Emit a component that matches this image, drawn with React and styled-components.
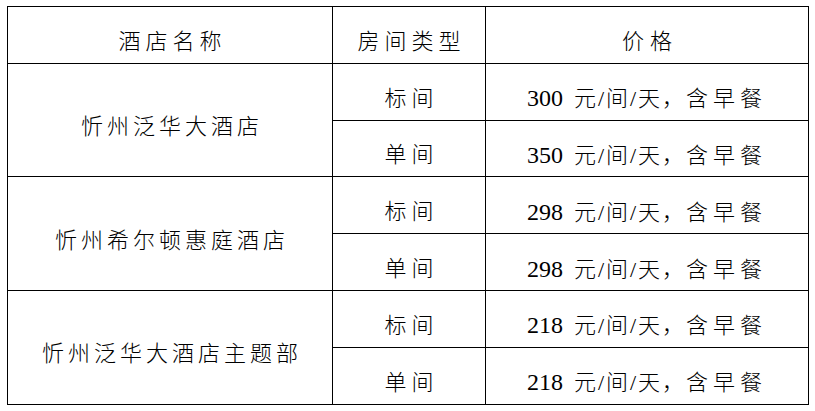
import React from 'react';
import styled, { createGlobalStyle } from 'styled-components';

const GlobalStyle = createGlobalStyle`
  html, body {
    margin: 0;
    padding: 0;
    background: #fff;
  }
  body {
    font-family: "Liberation Serif", "Noto Sans CJK SC", serif;
    color: #000;
  }
`;

const Page = styled.div`
  padding: 6px 7px 0 7px;
`;

const Table = styled.table`
  width: 801px;
  border-collapse: collapse;
  table-layout: fixed;
  font-size: 22px;
  font-weight: 300;
`;

const Cell = styled.td`
  border: 1.5px solid #000;
  height: ${p => (p.rowSpan > 1 ? 113.5 : 56.8)}px;
  padding: 14px 0 0 ${p => p.$spacing || 0}px;
  box-sizing: border-box;
  text-align: center;
  vertical-align: middle;
  letter-spacing: ${p => p.$spacing || 0}px;
  line-height: 28px;
  white-space: nowrap;
`;

const HeadCell = styled(Cell).attrs({ as: 'th' })`
  font-weight: 300;
`;

const Price = styled.span`
  letter-spacing: 2px;
`;

const Digits = styled.span`
  font-size: 24px;
  letter-spacing: 0;
  margin-right: 11px;
`;

const Wide = styled.span`
  letter-spacing: 5px;
`;

const hotels = [
  { name: '忻州泛华大酒店', rooms: [['标间', '300'], ['单间', '350']] },
  { name: '忻州希尔顿惠庭酒店', rooms: [['标间', '298'], ['单间', '298']] },
  { name: '忻州泛华大酒店主题部', rooms: [['标间', '218'], ['单间', '218']] },
];

export default function App() {
  return (
    <Page>
      <GlobalStyle />
      <Table>
        <colgroup>
          <col style={{ width: 325 }} />
          <col style={{ width: 153 }} />
          <col style={{ width: 323 }} />
        </colgroup>
        <thead>
          <tr>
            <HeadCell $spacing={5}>酒店名称</HeadCell>
            <HeadCell $spacing={5}>房间类型</HeadCell>
            <HeadCell $spacing={6}>价格</HeadCell>
          </tr>
        </thead>
        <tbody>
          {hotels.map(h =>
            h.rooms.map(([type, price], i) => (
              <tr key={h.name + i}>
                {i === 0 && (
                  <Cell rowSpan={2} $spacing={4}>{h.name}</Cell>
                )}
                <Cell $spacing={5}>{type}</Cell>
                <Cell>
                  <Price><Digits>{price}</Digits>元/间/天，</Price>
                  <Wide>含早餐</Wide>
                </Cell>
              </tr>
            ))
          )}
        </tbody>
      </Table>
    </Page>
  );
}
